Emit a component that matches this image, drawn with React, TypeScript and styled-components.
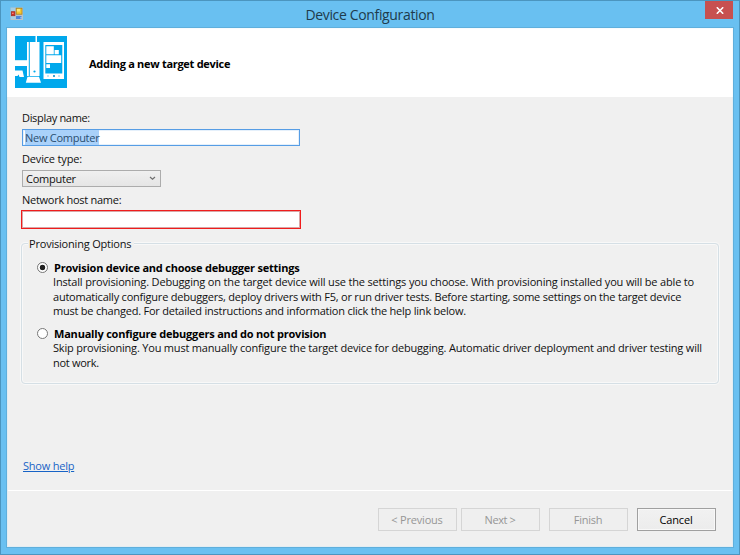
import React from 'react';
import styled, { createGlobalStyle } from 'styled-components';

const GlobalStyle = createGlobalStyle`
  *, *::before, *::after { box-sizing: border-box; }
  body { margin: 0; overflow: hidden; }
`;

const Window = styled.div`
  display: flex;
  flex-direction: column;
  width: 740px;
  height: 555px;
  padding: 0 5px 6px;
  border: 1px solid #4b95bf;
  background: #69c0f1;
  font: 11px/15px "Open Sans", "Noto Sans", sans-serif;
  color: #111;
`;

const TitleBar = styled.header`
  display: grid;
  grid-template-columns: 28px 1fr 28px;
  height: 26px;
  padding-right: 1px;
  flex: none;
`;

const AppIcon = styled.svg`
  margin: 6px 0 0 4px;
`;

const Title = styled.h1<{ $spacing: number }>`
  margin: 0;
  padding-left: 1px;
  text-align: center;
  font-size: 14px;
  font-weight: 400;
  line-height: 27px;
  color: #203b4c;
  letter-spacing: ${(p) => p.$spacing}px;
`;

const CloseButton = styled.button`
  display: grid;
  place-items: center;
  width: 28px;
  height: 18px;
  padding: 1px 0 0 1px;
  border: 0;
  background: #c75050;
`;

const Client = styled.main`
  flex: 1;
  display: flex;
  flex-direction: column;
  border: 1px solid #5fafdc;
  background: #f0f0f0;
  box-shadow: inset 0 0 0 1px #e2edf3;
`;

const Banner = styled.section`
  display: flex;
  align-items: flex-start;
  gap: 22px;
  height: 69px;
  padding: 7px 0 0 7px;
  border: solid #f8fbfd;
  border-width: 1px 1px 0;
  background: #fff;
`;

const BannerTitle = styled.h2`
  margin: 20px 0 0;
  font-size: 11px;
  line-height: 15px;
`;

const Spaced = styled.span<{ $spacing: number; $bold?: boolean }>`
  letter-spacing: ${(p) => p.$spacing}px;
  font-weight: ${(p) => (p.$bold ? 700 : 400)};
  white-space: pre;
  color: ${(p) => (p.$bold ? '#000' : 'inherit')};
`;

const Form = styled.form`
  display: flex;
  flex-direction: column;
  height: 393px;
  padding: 13px 13px 0 15px;
`;

const Label = styled.label<{ $height: number; $top: number }>`
  height: ${(p) => p.$height}px;
  padding-top: ${(p) => p.$top}px;
`;

const TextField = styled.div<{ $invalid?: boolean }>`
  display: flex;
  align-items: center;
  width: ${(p) => (p.$invalid ? 280 : 278)}px;
  height: ${(p) => (p.$invalid ? 19 : 17)}px;
  margin-left: ${(p) => (p.$invalid ? -1 : 0)}px;
  padding-left: 2px;
  border: 1px solid ${(p) => (p.$invalid ? '#f01c1c' : '#569de5')};
  box-shadow: inset 0 0 0 1px ${(p) => (p.$invalid ? '#d8a6a6' : '#e5f0fb')};
  background: #fff;
`;

const Selection = styled.mark`
  display: block;
  height: 15px;
  line-height: 16px;
  background: #a9d1fa;
  color: #294e70;
`;

const Select = styled.div`
  display: flex;
  align-items: center;
  justify-content: space-between;
  width: 139px;
  height: 17px;
  padding: 0 4px 0 3px;
  border: 1px solid #acacac;
  background: linear-gradient(#f0f0f0, #e5e5e5);
  line-height: 16px;
`;

const Group = styled.fieldset`
  width: 698px;
  height: 148px;
  margin: 7px 0 0 -1px;
  padding: 9px 0 0 15px;
  border: 1px solid #d5dfe5;
  border-radius: 4px;
  box-shadow: inset 0 0 0 1px #fff8, 0 0 0 1px #fff8;
`;

const Legend = styled.legend`
  height: 15px;
  margin-left: -9px;
  padding: 0 3px 0 1px;
  background: #f0f0f0;
`;

const Option = styled.div<{ $gap: number }>`
  display: grid;
  grid-template-columns: 17px 1fr;
  margin-bottom: ${(p) => p.$gap}px;
`;

const Radio = styled.span<{ $checked?: boolean }>`
  width: 11px;
  height: 11px;
  margin-top: 2px;
  border: 1px solid #777;
  border-radius: 50%;
  background: ${(p) => (p.$checked ? 'radial-gradient(circle, #222 0 2.5px, #fff 3.1px)' : '#fff')};
`;

const Description = styled.p`
  grid-column: 2;
  display: flex;
  flex-direction: column;
  margin: 0 0 0 -1px;
  line-height: 14.67px;
`;

const HelpLink = styled.a`
  align-self: flex-start;
  margin: auto 0 17px 1px;
  color: #1763c6;
  text-decoration: underline;
  text-underline-offset: 1px;
`;

const Footer = styled.footer`
  flex: 1;
  display: flex;
  justify-content: flex-end;
  gap: 9px;
  margin: 0 1px;
  padding: 17px 16px 0 0;
  border-top: 1px solid #fff;
`;

const Pair = styled.div`
  display: flex;
  gap: 4px;
`;

const Button = styled.button`
  width: 79px;
  height: 23px;
  padding: 0 1px 0 0;
  border: 1px solid #a0a0a0;
  background: linear-gradient(#f1f1f1, #ececec);
  box-shadow: inset 0 0 0 1px #f8f8f8;
  font: inherit;
  color: #000;

  &:disabled {
    border-color: #d5d5d5;
    background: #efefef;
    box-shadow: none;
    color: #969696;
  }
`;

const installLines: [string, number][] = [
  ['Install provisioning. Debugging on the target device will use the settings you choose. With provisioning installed you will be able to', -0.166],
  ['automatically configure debuggers, deploy drivers with F5, or run driver tests. Before starting, some settings on the target device', -0.222],
  ['must be changed. For detailed instructions and information click the help link below.', -0.222],
];

const skipLines: [string, number][] = [
  ['Skip provisioning. You must manually configure the target device for debugging. Automatic driver deployment and driver testing will', -0.192],
  ['not work.', -0.3],
];

const Lines = ({ lines }: { lines: [string, number][] }) => (
  <Description>
    {lines.map(([text, spacing]) => (
      <Spaced key={text} $spacing={spacing}>{text}</Spaced>
    ))}
  </Description>
);

const FormsIcon = () => (
  <AppIcon width="14" height="14" viewBox="0 0 14 14">
    <rect x="0.5" y="0.5" width="12.5" height="12.5" fill="#b9c3cb" />
    <rect x="1.3" y="4.7" width="3.6" height="4" fill="#d82c22" stroke="#97312b" strokeWidth=".7" />
    <rect x="2.2" y="5.7" width="1.3" height="1.3" fill="#ff9b8c" />
    <rect x="6.2" y="1.2" width="5.8" height="6" fill="#f7c62f" stroke="#a9801e" strokeWidth=".8" />
    <rect x="7" y="2" width="3" height="2.5" fill="#ffe679" />
    <rect x="6" y="9" width="5.5" height="3" fill="#4e86dc" />
    <path d="M1 1h4v3H1zM1 10h4v2H1z" fill="#a5cfe6" />
    <path d="M10.5 10h1v1.5h-1z" fill="#b8dcff" />
  </AppIcon>
);

const DevicesIcon = () => (
  <svg width="52" height="52" viewBox="0 0 52 52">
    <rect width="52" height="52" fill="#00a8ec" />
    <g fill="#fff">
      <rect x="20.5" width="1.5" height="7" />
      <path d="M12 6h1.800v34H12zM14.800 6H24.500v34h-9.700z" />
      <path d="M12.500 40.700H24l2 6H10.800z" />
      <path d="M0 24.200h12V30H0z" />
      <path d="M0 34.500h7.500L9 41H4.500l-.8-2.500L2.500 40H0z" />
      <path d="M28.500 6h20.500v37H28.500zM30.300 9v28.500h17V9z" fillRule="evenodd" />
      <path d="M31.300 10.200h7.500v8h-7.500zM39.600 14h4.200v4.200h-4.200zM31.300 19.300h14.900v7.800H31.300zM31.300 28.200h3.700v3.800h-3.700z" />
    </g>
    <circle cx="19.5" cy="35.5" r="1.1" fill="#00a8ec" />
    <path d="M32 40h2M43 40h2" stroke="#7bcff4" />
    <rect x="38" y="39" width="2" height="2" fill="#3aa5d6" />
  </svg>
);

export default function App() {
  return (
    <>
      <GlobalStyle />
      <Window>
        <TitleBar>
          <FormsIcon />
          <Title $spacing={-0.35}>Device Configuration</Title>
          <CloseButton aria-label="Close">
            <svg width="8" height="7" viewBox="0 0 8 7">
              <path d="M.8.3l6.400 6.400M7.200.3L.8 6.700" stroke="#fff" strokeWidth="1.6" />
            </svg>
          </CloseButton>
        </TitleBar>
        <Client>
          <Banner>
            <DevicesIcon />
            <BannerTitle><Spaced $spacing={-0.29} $bold>Adding a new target device</Spaced></BannerTitle>
          </Banner>
          <Form>
            <Label $height={19} $top={0}><Spaced $spacing={-0.32}>Display name:</Spaced></Label>
            <TextField>
              <Selection><Spaced $spacing={-0.27}>New Computer</Spaced></Selection>
            </TextField>
            <Label $height={24} $top={5}><Spaced $spacing={-0.17}>Device type:</Spaced></Label>
            <Select>
              <Spaced $spacing={-0.25}>Computer</Spaced>
              <svg width="7" height="5" viewBox="0 0 7 5">
                <path d="M1 1l2.500 2.300L6 1" fill="none" stroke="#707070" strokeWidth="1.2" />
              </svg>
            </Select>
            <Label $height={23} $top={5}><Spaced $spacing={-0.27}>Network host name:</Spaced></Label>
            <TextField $invalid />
            <Group>
              <Legend><Spaced $spacing={-0.2}>Provisioning Options</Spaced></Legend>
              <Option $gap={7}>
                <Radio $checked />
                <Spaced $spacing={-0.22} $bold>Provision device and choose debugger settings</Spaced>
                <Lines lines={installLines} />
              </Option>
              <Option $gap={0}>
                <Radio />
                <Spaced $spacing={-0.2} $bold>Manually configure debuggers and do not provision</Spaced>
                <Lines lines={skipLines} />
              </Option>
            </Group>
            <HelpLink><Spaced $spacing={-0.22}>Show help</Spaced></HelpLink>
          </Form>
          <Footer>
            <Pair>
              <Button type="button" disabled><Spaced $spacing={-0.2}>{'< Previous'}</Spaced></Button>
              <Button type="button" disabled><Spaced $spacing={-0.4}>{'Next >'}</Spaced></Button>
            </Pair>
            <Button type="button" disabled><Spaced $spacing={-0.25}>Finish</Spaced></Button>
            <Button type="button"><Spaced $spacing={-0.15}>Cancel</Spaced></Button>
          </Footer>
        </Client>
      </Window>
    </>
  );
}
